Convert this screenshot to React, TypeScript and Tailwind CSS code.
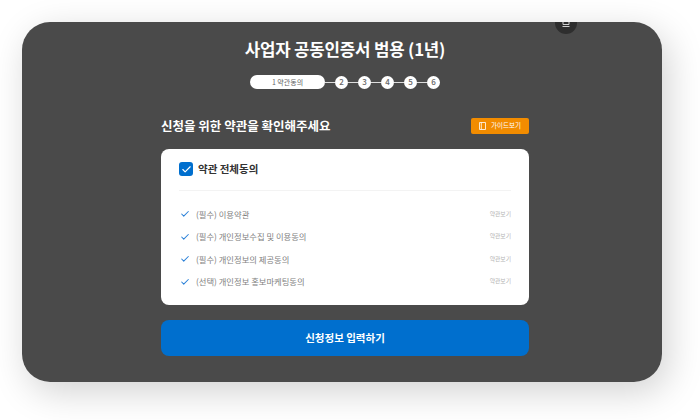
import React from "react";
import { Check } from "lucide-react";

const font = { fontFamily: '"Noto Sans CJK KR", "Noto Sans", sans-serif' };

const terms = [
  "(필수) 이용약관",
  "(필수) 개인정보수집 및 이용동의",
  "(필수) 개인정보의 제공동의",
  "(선택) 개인정보 홍보마케팅동의",
];

const App = () => {
  return (
    <div
      style={font}
      className="w-[700px] h-[420px] bg-white pt-[22px] pl-[22px] overflow-hidden antialiased"
    >
      <div className="shadow-[6px_10px_36px_rgba(0,0,0,0.18)] rounded-[28px] w-[640px] h-[360px]">
        <div className="relative w-[640px] h-[360px] rounded-[28px] bg-[#4a4a4a] overflow-hidden flex flex-col items-center pl-[6px]">
          {/* floating button, mostly cut off by the panel */}
          <div className="absolute left-[533px] top-[-10px] w-[22px] h-[22px] rounded-full bg-[#2e2e2e] flex items-end justify-center pb-[7px]">
            <svg width="8" height="7" viewBox="0 0 8 7" fill="none" stroke="#d0d0d0" strokeWidth="1">
              <path d="M1 0v4.5h6V0M0.5 6.5h7" />
            </svg>
          </div>

          <p className="mt-[14px] h-[26px] leading-[26px] text-[16.8px] font-bold tracking-[-0.2px] text-white">
            사업자 공동인증서 범용 (1년)
          </p>

          <div className="mt-[13px] flex items-center h-[14px]">
            <div className="w-[75px] h-[14px] rounded-full bg-white flex items-center justify-center text-[7px] text-[#666666]">
              1 약관동의
            </div>
            {[2, 3, 4, 5, 6].map((n) => (
              <div key={n} className="flex items-center">
                <div className="w-[10px] h-px bg-[#dddddd]" />
                <div className="w-[13px] h-[13px] rounded-full bg-white flex items-center justify-center text-[8px] font-medium text-[#666666]">
                  {n}
                </div>
              </div>
            ))}
          </div>

          <div className="mt-[29px] w-[368px] flex items-center justify-between h-[16px]">
            <p className="text-[12.5px] font-semibold text-white">
              신청을 위한 약관을 확인해주세요
            </p>
            <button className="w-[58px] h-[16px] rounded-[2px] bg-[#f28c00] flex items-center justify-center gap-[5px] text-[6.5px] text-white">
              <svg width="7" height="8" viewBox="0 0 7 8" fill="none" stroke="#ffffff" strokeWidth="0.8">
                <path d="M0.5 0.5h6v7h-6zM2.3 0.5v7" />
              </svg>
              가이드보기
            </button>
          </div>

          <div className="mt-[15px] w-[368px] h-[156px] rounded-[8px] bg-white px-[18px] pt-[13px]">
            <div className="flex items-center gap-[5px] h-[14px]">
              <div className="w-[14px] h-[14px] rounded-[3px] bg-[#006fce] flex items-center justify-center">
                <Check size={11} strokeWidth={2.5} className="text-white" />
              </div>
              <p className="text-[10.5px] font-bold text-[#333333]">약관 전체동의</p>
            </div>
            <div className="mt-[14px] h-px bg-[#f3f3f3]" />
            <div className="mt-[15px] flex flex-col gap-[6.5px]">
              {terms.map((t) => (
                <div key={t} className="flex items-center h-[16px]">
                  <Check size={10} strokeWidth={2.5} className="text-[#2a80d8] ml-[1px]" />
                  <p className="ml-[6px] text-[8.3px] text-[#808080]">{t}</p>
                  <p className="ml-auto text-[5.8px] text-[#b5b5b5]">약관보기</p>
                </div>
              ))}
            </div>
          </div>

          <button className="mt-[15px] w-[368px] h-[36px] rounded-[8px] bg-[#006fce] text-white text-[10.5px] font-bold">
            신청정보 입력하기
          </button>
        </div>
      </div>
    </div>
  );
};

export default App;
